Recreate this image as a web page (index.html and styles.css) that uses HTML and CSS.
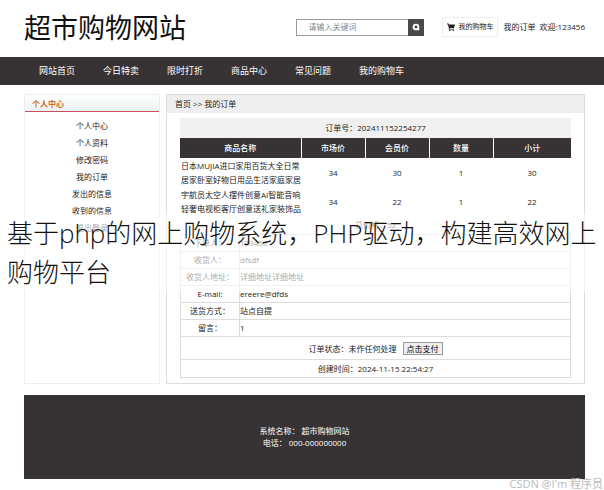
FILE: index.html
```html
<!DOCTYPE html>
<html lang="zh-CN">
<head>
  <meta charset="UTF-8">
  <meta name="viewport" content="width=device-width, initial-scale=1.0">
  <title>超市购物网站</title>
  <link rel="stylesheet" href="styles.css">
</head>

<body>
  <header class="header">
    <h1 class="logo">超市购物网站</h1>
    <form class="search">
      <input type="text" name="keyword" placeholder="请输入关键词" aria-label="关键词">
      <button type="submit" aria-label="搜索">
        <svg width="10" height="10" viewBox="0 0 10 10"><circle cx="5" cy="5" r="2.4" fill="none" stroke="#fff" stroke-width="1.9"/><path d="M7 7 8.2 8.2" stroke="#fff" stroke-width="1.2"/></svg>
      </button>
    </form>
    <a class="cart" href="#">
      <svg width="8" height="8" viewBox="0 0 16 16"><path d="M0 1h3l1 2h12l-2 7H5l.4 1.5H14V13H4L2 3H0z" fill="#222"/><circle cx="5.5" cy="14.5" r="1.5" fill="#222"/><circle cx="12.5" cy="14.5" r="1.5" fill="#222"/></svg>
      我的购物车
    </a>
    <a class="orders" href="#">我的订单</a>
    <span class="welcome">欢迎:123456</span>
  </header>

  <nav class="nav">
    <a href="#">网站首页</a>
    <a href="#">今日特卖</a>
    <a href="#">限时打折</a>
    <a href="#">商品中心</a>
    <a href="#">常见问题</a>
    <a href="#">我的购物车</a>
  </nav>

  <div class="main">
    <aside class="side">
      <h2>个人中心</h2>
      <ul>
        <li><a href="#">个人中心</a></li>
        <li><a href="#">个人资料</a></li>
        <li><a href="#">修改密码</a></li>
        <li><a href="#">我的订单</a></li>
        <li><a href="#">发出的信息</a></li>
        <li><a href="#">收到的信息</a></li>
        <li><a href="#">退出登录</a></li>
      </ul>
    </aside>

    <section class="content">
      <div class="crumb"><a href="#">首页</a> &gt;&gt; 我的订单</div>
      <table class="goods">
        <caption>订单号：202411152254277</caption>
        <thead>
          <tr><th class="name">商品名称</th><th>市场价</th><th>会员价</th><th>数量</th><th class="sum">小计</th></tr>
        </thead>
        <tbody>
          <tr><td class="name">日本MUJIA进口家用百货大全日常居家卧室好物日用品生活家庭家居</td><td>34</td><td>30</td><td>1</td><td>30</td></tr>
          <tr><td class="name">宇航员太空人摆件创意AI智能音响轻奢电视柜客厅创意送礼家装饰品</td><td>34</td><td>22</td><td>1</td><td>22</td></tr>
        </tbody>
      </table>
      <div class="total">总价格：52</div>
      <table class="info">
        <tr><th>下单人：</th><td>123456</td></tr>
        <tr><th>收货人：</th><td>dfsdf</td></tr>
        <tr><th>收货人地址：</th><td>详细地址详细地址</td></tr>
        <tr><th>E-mail:</th><td>ereere@dfds</td></tr>
        <tr><th>送货方式：</th><td>站点自提</td></tr>
        <tr><th>留言：</th><td>1</td></tr>
        <tr class="status"><td colspan="2">订单状态：未作任何处理 <button type="button">点击支付</button></td></tr>
        <tr class="created"><td colspan="2">创建时间：2024-11-15 22:54:27</td></tr>
      </table>
    </section>
  </div>

  <footer class="footer">
    <div>系统名称： 超市购物网站</div>
    <div>电话： 000-000000000</div>
  </footer>

  <div class="banner">基于php的网上购物系统，PHP驱动，构建高效网上购物平台</div>
  <div class="watermark">CSDN @I'm 程序员</div>
</body>
</html>
```

FILE: styles.css
```css
* {
  box-sizing: border-box;
}

body {
  margin: 0;
  position: relative;
  overflow-x: hidden;
  background: #fff;
  color: #222;
  font-family: "Open Sans", "Noto Sans CJK SC", sans-serif;
  font-size: 8px;
  line-height: 12px;
}

a {
  color: inherit;
  text-decoration: none;
}

button,
input {
  font: inherit;
}

.header {
  display: flex;
  align-items: center;
  height: 57px;
  padding: 0 19px 3px 24px;
}

.logo {
  flex: 1;
  margin: 0;
  padding-top: 2px;
  color: #111;
  font-size: 27px;
  line-height: 40px;
  font-weight: 400;
}

.search {
  display: flex;
  width: 128px;
  height: 17px;
  margin-right: 18px;
}

.search input {
  flex: 1;
  min-width: 0;
  padding: 0 11px;
  border: 1px solid #999;
  border-right: 0;
  border-radius: 0;
}

.search input::placeholder {
  color: #888;
}

.search button {
  display: flex;
  align-items: center;
  justify-content: center;
  width: 16px;
  padding: 0;
  border: 0;
  background: #4a4a4a;
}

.cart {
  display: flex;
  align-items: center;
  gap: 3px;
  height: 20px;
  padding: 0 4px;
  border: 1px solid #eee;
  font-size: 7px;
}

.orders {
  margin: 0 4px 0 5px;
}

.nav {
  display: flex;
  gap: 28px;
  height: 28px;
  padding-left: 39px;
  background: #373233;
  color: #fff;
  font-size: 9px;
  line-height: 28px;
}

.main {
  display: flex;
  gap: 6px;
  margin: 9px 19px 0 24px;
}

.side {
  width: 136px;
  border: 1px solid #eee;
}

.side h2 {
  height: 17px;
  margin: 0;
  padding-left: 7px;
  border-bottom: 1px solid #c8505a;
  background: linear-gradient(#fff, #edf2f2);
  color: #d2691e;
  font-size: 8px;
  line-height: 18px;
}

.side ul {
  margin: 0;
  padding: 5px 0;
  list-style: none;
  text-align: center;
  line-height: 17px;
}

.content {
  flex: 1;
  padding-bottom: 5px;
  border: 1px solid #ddd;
}

.crumb {
  height: 18px;
  padding-left: 8px;
  background: #eee;
  line-height: 18px;
}

.goods,
.info {
  width: calc(100% - 26px);
  margin: 0 13px;
  border-collapse: collapse;
  table-layout: fixed;
}

.goods {
  margin-top: 5px;
  text-align: center;
}

.goods caption {
  height: 20px;
  background: #f0f0f0;
  line-height: 20px;
}

.goods th {
  width: 64px;
  height: 20px;
  padding: 0;
  border-right: 1px solid #fff;
  background: #373233;
  color: #fff;
  font-weight: 500;
}

.goods th.name {
  width: 121px;
}

.goods th.sum {
  width: auto;
  border-right: 0;
}

.goods td {
  height: 29px;
  padding: 0;
}

.goods td.name {
  line-height: 14px;
  text-align: left;
  padding-left: 1px;
}

.total {
  height: 18px;
  margin: 0 13px;
  line-height: 17px;
  text-align: center;
}

.info th,
.info td {
  height: 17px;
  padding: 0;
  border: 1px solid #ddd;
}

.info th {
  width: 59px;
  font-weight: 400;
}

.info .status td,
.info .created td {
  text-align: center;
}

.info .status td {
  height: 23px;
}

.info .created td {
  height: 18px;
}

.info button {
  height: 13px;
  margin-left: 4px;
  padding: 0 3px;
  border: 1px solid #999;
  background: #eee;
  line-height: 11px;
}

.footer {
  height: 84px;
  margin: 11px 19px 11px 24px;
  padding-top: 30px;
  background: #373233;
  color: #fff;
  text-align: center;
}

/* headline strip laid over the page */
.banner {
  position: absolute;
  top: 214px;
  left: 0;
  right: 0;
  padding: 0 7px;
  background: rgba(255, 255, 255, 0.6);
  color: #111;
  font-size: 26px;
  font-weight: 300;
  line-height: 39px;
}

.watermark {
  position: absolute;
  right: 1px;
  bottom: 0;
  color: #bbb;
  font-size: 11px;
  line-height: 12px;
  white-space: nowrap;
}
```
